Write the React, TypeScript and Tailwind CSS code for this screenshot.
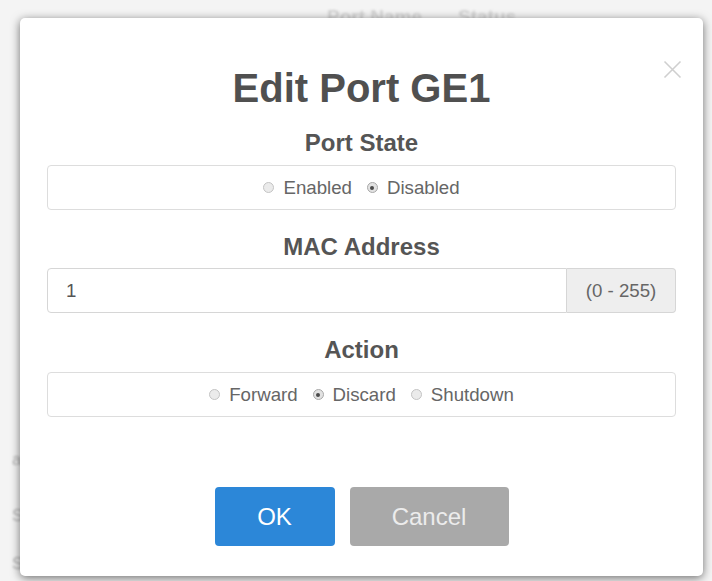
import React from "react";

function Radio({ label, checked }: { label: string; checked?: boolean }) {
  return (
    <span className="inline-flex items-center">
      <span
        className={
          "flex h-[11px] w-[11px] items-center justify-center rounded-full border " +
          (checked ? "border-[#a9a9a9] bg-[#e2e2e2]" : "border-[#c4c4c4] bg-[#ebebeb]")
        }
      >
        {checked ? <span className="h-[4px] w-[4px] rounded-full bg-[#4a4a4a]" /> : null}
      </span>
      <span className="ml-[9px]">{label}</span>
    </span>
  );
}

export default function App() {
  return (
    <div
      className="relative h-[581px] w-[712px] overflow-hidden bg-[#f4f4f4]"
      style={{ fontFamily: '"Liberation Sans", Arial, sans-serif' }}
    >
      {/* faint page behind the dialog */}
      <div className="flex flex-col text-[#d4d4d4]">
        <div className="flex gap-[36px] pl-[327px] pt-[6px] text-[19px] font-bold leading-[22px] blur-[1.2px]">
          <span>Port Name</span>
          <span>Status</span>
        </div>
        <div className="mt-[408px] flex flex-col pl-[12px] text-[17px] leading-[20px] text-[#b4b4b4] blur-[0.8px]">
          <div className="h-[58px] pt-[14px]">a1</div>
          <div className="h-[52px] pt-[12px]">S1</div>
          <div className="h-[40px] pt-[8px]">S1</div>
        </div>
      </div>

      {/* dialog */}
      <div className="absolute left-[20px] top-[18px] flex h-[558px] w-[683px] flex-col rounded-[5px] bg-white px-[27px] shadow-[0_2px_10px_rgba(0,0,0,0.55)]">
        <svg
          className="absolute right-[21px] top-[42px]"
          width="19"
          height="19"
          viewBox="0 0 19 19"
          fill="none"
          stroke="#cfcfcf"
          strokeWidth="1.6"
        >
          <path d="M1.5 1.5 L17.5 17.5 M17.5 1.5 L1.5 17.5" />
        </svg>

        <h1 className="mt-[48px] text-center text-[40px] font-bold leading-[44px] text-[#505050]">
          Edit Port GE1
        </h1>

        <div className="mt-[19px] text-center text-[24px] font-bold leading-[28px] text-[#555555]">
          Port State
        </div>
        <div className="mt-[8px] flex h-[45px] items-center justify-center gap-[15px] rounded-[4px] border border-[#dddddd] text-[18.67px] text-[#666666]">
          <Radio label="Enabled" />
          <Radio label="Disabled" checked />
        </div>

        <div className="mt-[23px] text-center text-[24px] font-bold leading-[28px] text-[#555555]">
          MAC Address
        </div>
        <div className="mt-[7px] flex h-[45px] text-[18.67px] text-[#555555]">
          <div className="flex flex-1 items-center rounded-l-[4px] border border-[#d6d6d6] pl-[18px]">
            1
          </div>
          <div className="flex w-[109px] items-center justify-center rounded-r-[4px] border border-l-0 border-[#d6d6d6] bg-[#eeeeee] text-[#666666]">
            (0 - 255)
          </div>
        </div>

        <div className="mt-[23px] text-center text-[24px] font-bold leading-[28px] text-[#555555]">
          Action
        </div>
        <div className="mt-[8px] flex h-[45px] items-center justify-center gap-[15px] rounded-[4px] border border-[#dddddd] text-[18.67px] text-[#666666]">
          <Radio label="Forward" />
          <Radio label="Discard" checked />
          <Radio label="Shutdown" />
        </div>

        <div className="mt-[70px] flex justify-center gap-[15px] text-[24px]">
          <button className="h-[59px] w-[120px] rounded-[4px] bg-[#2c87d8] text-white">OK</button>
          <button className="h-[59px] w-[159px] rounded-[4px] bg-[#a9a9a9] text-[#ececec]">Cancel</button>
        </div>
      </div>
    </div>
  );
}
